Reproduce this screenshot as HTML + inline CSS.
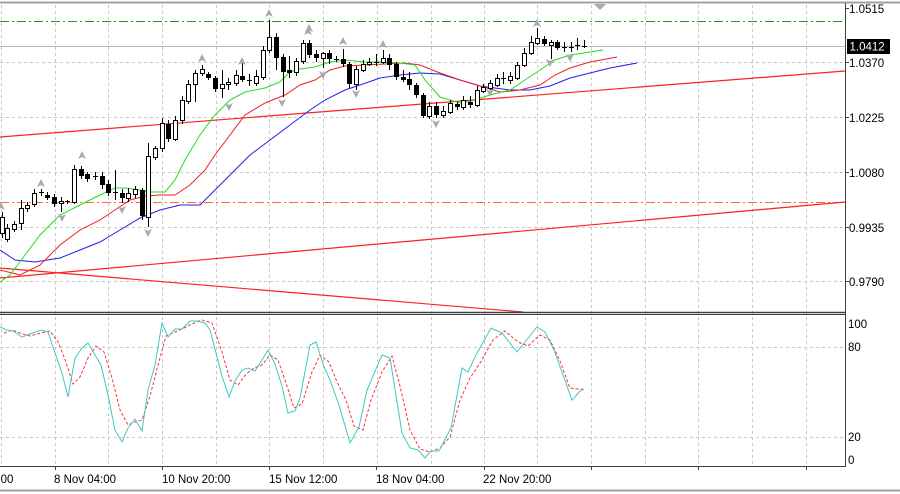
<!DOCTYPE html>
<html><head><meta charset="utf-8"><style>
html,body{margin:0;padding:0;background:#fff;}
svg{display:block;font-family:"Liberation Sans",sans-serif;}
</style></head><body>
<svg width="900" height="494" viewBox="0 0 900 494" xmlns="http://www.w3.org/2000/svg">
<rect width="900" height="494" fill="#fff"/>
<line x1="0" y1="2.5" x2="900" y2="2.5" stroke="#a0a0a0" stroke-width="2"/>
<g stroke="#c8c8c8" stroke-dasharray="3,3" stroke-width="1">
<line x1="1.5" y1="5" x2="1.5" y2="466"/><line x1="55.5" y1="5" x2="55.5" y2="466"/><line x1="108.5" y1="5" x2="108.5" y2="466"/><line x1="162.5" y1="5" x2="162.5" y2="466"/><line x1="216.5" y1="5" x2="216.5" y2="466"/><line x1="269.5" y1="5" x2="269.5" y2="466"/><line x1="323.5" y1="5" x2="323.5" y2="466"/><line x1="377.5" y1="5" x2="377.5" y2="466"/><line x1="431.5" y1="5" x2="431.5" y2="466"/><line x1="484.5" y1="5" x2="484.5" y2="466"/><line x1="537.5" y1="5" x2="537.5" y2="466"/><line x1="591.5" y1="5" x2="591.5" y2="466"/><line x1="645.5" y1="5" x2="645.5" y2="466"/><line x1="698.5" y1="5" x2="698.5" y2="466"/><line x1="752.5" y1="5" x2="752.5" y2="466"/><line x1="806.5" y1="5" x2="806.5" y2="466"/>
<line x1="0" y1="62.5" x2="845" y2="62.5"/><line x1="0" y1="117.5" x2="845" y2="117.5"/><line x1="0" y1="172.5" x2="845" y2="172.5"/><line x1="0" y1="227.5" x2="845" y2="227.5"/><line x1="0" y1="281.5" x2="845" y2="281.5"/>
<line x1="0" y1="347.5" x2="845" y2="347.5"/><line x1="0" y1="437.5" x2="845" y2="437.5"/>
</g>
<line x1="0" y1="21.5" x2="845" y2="21.5" stroke="#1a9a1a" stroke-dasharray="9,3,2,3"/>
<line x1="0" y1="46.5" x2="845" y2="46.5" stroke="#b8b8b8"/>
<line x1="0" y1="202.5" x2="845" y2="202.5" stroke="#ff6a30" stroke-dasharray="9,3,2,3"/>
<g stroke="#ff2020" stroke-width="1.2" fill="none">
<line x1="0" y1="137" x2="845" y2="71"/>
<line x1="0" y1="278" x2="845" y2="202"/>
<line x1="0" y1="268" x2="523" y2="312"/>
</g>
<polyline fill="none" stroke="#2020ee" points="0,250 15,260 35,262 60,258 80,250 100,242 120,230 140,218 160,210 180,205 200,205 215,190 230,175 250,155 270,140 290,125 310,110 325,100 345,90 360,85 380,78 400,75 420,73 440,74 460,80 480,86 510,90 530,90 550,86 570,78 590,73 610,68 637,63"/>
<polyline fill="none" stroke="#ee2020" points="0,270 20,275 40,265 60,245 80,230 100,220 115,210 130,200 145,196 160,195 175,195 190,185 205,170 215,155 230,135 245,115 265,103 285,95 300,85 315,80 330,70 345,66 365,65 385,64 405,63 420,65 440,73 460,80 480,86 500,92 520,90 540,85 555,75 570,68 590,62 617,57"/>
<polyline fill="none" stroke="#20dd20" points="0,282 10,275 25,255 40,235 60,215 80,205 100,195 115,188 125,188 140,190 150,192 165,192 175,180 185,160 200,135 215,115 230,100 245,92 265,88 280,82 290,72 300,69 315,67 330,62 345,60 365,62 385,62 400,63 415,65 425,80 440,97 460,103 475,100 490,95 510,90 525,80 540,70 555,60 570,55 590,52 603,50"/>
<g stroke="#000" stroke-width="1">
<!-- candles: wicks -->
<path d="M2.5 212V238M7.5 224V242M14.5 221V232M21.5 200V230M27.5 202V212M34.5 189V207M41.5 189V196M47.5 192V200M54.5 194V207M61.5 197V212M67.5 200V204M74.5 165V204M81.5 166V179M87.5 172V182M95.5 172V180M102.5 172V189M108.5 180V196M115.5 170V200M122.5 189V203M128.5 188V202M135.5 186V198M142.5 188V220M148.5 143V227M155.5 146V160M162.5 118V152M168.5 120V142M175.5 116V141M182.5 96V124M188.5 80V104M195.5 70V102M202.5 65V76M208.5 72V80M215.5 76V92M222.5 70V98M228.5 78V90M236.5 70V86M242.5 62V82M249.5 74V86M256.5 70V86M263.5 46V80M269.5 20V53M276.5 33V70M283.5 54V97M289.5 56V78M296.5 58V76M303.5 40V64M309.5 40V58M316.5 50V62M323.5 52V68M329.5 50V64M336.5 56V62M343.5 49V67M349.5 62V88M356.5 66V90M363.5 60V72M369.5 58V66M376.5 54V66M383.5 50V64M389.5 54V70M396.5 62V80M403.5 70V82M409.5 72V90M416.5 83V98M423.5 93V118M429.5 102V119M436.5 102V118M443.5 106V118M450.5 100V114M457.5 102V110M463.5 96V110M470.5 96V108M477.5 86V107M483.5 84V93M490.5 80V90M497.5 74V87M503.5 72V84M510.5 72V84M517.5 62V80M524.5 48V67M531.5 36V55M537.5 28V45M544.5 36V46M551.5 40V59M557.5 40V50M564.5 42V52M571.5 42V52M577.5 38V50M584.5 40V48"/>
</g>
<g stroke="#000" stroke-width="1" fill="#fff">
<rect x="0.5" y="217.5" width="4" height="16"/><rect x="5.5" y="228.5" width="4" height="11"/><rect x="12.5" y="224.5" width="4" height="5"/><rect x="19.5" y="208.5" width="4" height="15"/><rect x="25.5" y="205.5" width="4" height="3"/><rect x="32.5" y="193.5" width="4" height="11"/><rect x="59.5" y="201.5" width="4" height="2"/><rect x="72.5" y="169.5" width="4" height="33"/><rect x="126.5" y="193.5" width="4" height="5"/><rect x="133.5" y="189.5" width="4" height="5"/><rect x="146.5" y="156.5" width="4" height="61"/><rect x="153.5" y="148.5" width="4" height="9"/><rect x="160.5" y="123.5" width="4" height="25"/><rect x="173.5" y="120.5" width="4" height="19"/><rect x="180.5" y="100.5" width="4" height="20"/><rect x="186.5" y="84.5" width="4" height="17"/><rect x="193.5" y="73.5" width="4" height="11"/><rect x="200.5" y="69.5" width="4" height="4"/><rect x="220.5" y="84.5" width="4" height="4"/><rect x="226.5" y="82.5" width="4" height="2"/><rect x="234.5" y="75.5" width="4" height="8"/><rect x="254.5" y="76.5" width="4" height="7"/><rect x="261.5" y="50.5" width="4" height="27"/><rect x="267.5" y="37.5" width="4" height="13"/><rect x="294.5" y="61.5" width="4" height="11"/><rect x="301.5" y="43.5" width="4" height="18"/><rect x="321.5" y="53.5" width="4" height="5"/><rect x="354.5" y="69.5" width="4" height="15"/><rect x="361.5" y="64.5" width="4" height="6"/><rect x="367.5" y="62.5" width="4" height="2"/><rect x="381.5" y="58.5" width="4" height="4"/><rect x="427.5" y="106.5" width="4" height="10"/><rect x="441.5" y="111.5" width="4" height="4"/><rect x="448.5" y="103.5" width="4" height="9"/><rect x="461.5" y="100.5" width="4" height="7"/><rect x="475.5" y="90.5" width="4" height="15"/><rect x="481.5" y="87.5" width="4" height="4"/><rect x="488.5" y="83.5" width="4" height="5"/><rect x="495.5" y="78.5" width="4" height="7"/><rect x="508.5" y="76.5" width="4" height="4"/><rect x="515.5" y="65.5" width="4" height="13"/><rect x="522.5" y="53.5" width="4" height="12"/><rect x="529.5" y="42.5" width="4" height="11"/><rect x="535.5" y="38.5" width="4" height="5"/><rect x="549.5" y="42.5" width="4" height="3"/>
</g>
<g fill="#000">
<rect x="45" y="195" width="5" height="3"/><rect x="52" y="197" width="5" height="7"/><rect x="79" y="169" width="5" height="7"/><rect x="85" y="174" width="5" height="5"/><rect x="100" y="176" width="5" height="9"/><rect x="106" y="184" width="5" height="9"/><rect x="120" y="193" width="5" height="5"/><rect x="140" y="190" width="5" height="26"/><rect x="166" y="124" width="5" height="15"/><rect x="206" y="74" width="5" height="4"/><rect x="213" y="78" width="5" height="11"/><rect x="240" y="76" width="5" height="4"/><rect x="241" y="76" width="4" height="4"/><rect x="274" y="37" width="5" height="21"/><rect x="281" y="57" width="5" height="15"/><rect x="287" y="70" width="5" height="3"/><rect x="307" y="43" width="5" height="12"/><rect x="314" y="54" width="5" height="4"/><rect x="327" y="53" width="5" height="6"/><rect x="341" y="59" width="5" height="5"/><rect x="347" y="64" width="5" height="20"/><rect x="387" y="58" width="5" height="7"/><rect x="394" y="64" width="5" height="13"/><rect x="401" y="77" width="5" height="3"/><rect x="407" y="79" width="5" height="6"/><rect x="414" y="85" width="5" height="10"/><rect x="421" y="95" width="5" height="21"/><rect x="434" y="106" width="5" height="9"/><rect x="455" y="104" width="5" height="3"/><rect x="468" y="102" width="5" height="3"/><rect x="542" y="39" width="5" height="5"/><rect x="555" y="42" width="5" height="6"/>
<rect x="39" y="192" width="5" height="1"/><rect x="65" y="201" width="5" height="1"/><rect x="93" y="176" width="5" height="1"/><rect x="113" y="192" width="5" height="1"/><rect x="247" y="80" width="5" height="1"/><rect x="334" y="59" width="5" height="1"/><rect x="374" y="62" width="5" height="1"/><rect x="501" y="78" width="5" height="1"/><rect x="562" y="47" width="5" height="1"/><rect x="569" y="47" width="5" height="1"/><rect x="575" y="45" width="5" height="1"/><rect x="582" y="46" width="5" height="1"/>
</g>
<g fill="#a8a8b0">
<path d="M269 9l-4 8 4-2 4 2z"/><path d="M309 24l-4 8 4-2 4 2z"/><path d="M343 37l-4 8 4-2 4 2z"/><path d="M383 40l-4 8 4-2 4 2z"/><path d="M202 54l-4 8 4-2 4 2z"/><path d="M242 57l-4 8 4-2 4 2z"/><path d="M82 151l-4 8 4-2 4 2z"/><path d="M41 179l-4 8 4-2 4 2z"/><path d="M1 202l-4 8 4-2 4 2z"/><path d="M537 19l-4 8 4-2 4 2z"/><path d="M308 27l-4 8 4-2 4 2z"/>
<path d="M148 237l-4-8 4 2 4-2z"/><path d="M122 214l-4-8 4 2 4-2z"/><path d="M62 222l-4-8 4 2 4-2z"/><path d="M229 111l-4-8 4 2 4-2z"/><path d="M282 107l-4-8 4 2 4-2z"/><path d="M323 79l-4-8 4 2 4-2z"/><path d="M356 98l-4-8 4 2 4-2z"/><path d="M436 128l-4-8 4 2 4-2z"/><path d="M490 97l-4-8 4 2 4-2z"/><path d="M550 67l-4-8 4 2 4-2z"/><path d="M570 62l-4-8 4 2 4-2z"/><path d="M600 10l-6-6h12z"/>
</g>
<line x1="0" y1="312.5" x2="846" y2="312.5" stroke="#404040" stroke-width="1.5"/>
<line x1="0" y1="314.5" x2="846" y2="314.5" stroke="#404040" stroke-width="1"/>
<line x1="845.5" y1="3" x2="845.5" y2="467" stroke="#404040"/>
<line x1="0" y1="466.5" x2="846" y2="466.5" stroke="#404040"/>
<polyline fill="none" stroke="#ff3030" stroke-dasharray="3,2" points="4,333 12,330 20,333 30,336 41,333 50,331 58,342 66,362 73,384 80,377 88,358 96,346 104,352 112,378 120,410 128,425 135,422 142,420 150,396 158,365 166,336 175,332 184,328 194,323 202,320 212,323 222,352 230,380 238,385 246,374 254,368 262,365 270,355 278,360 286,383 294,408 302,404 312,372 320,355 329,362 337,382 346,400 354,426 363,430 371,400 382,372 392,356 400,386 410,430 420,449 430,452 440,448 450,437 460,400 470,378 480,363 493,340 505,331 518,342 528,346 540,335 550,340 560,361 570,388 585,390"/>
<polyline fill="none" stroke="#40c8c0" points="0,327 7,330 13,331 22,337 30,334 41,330 48,332 55,353 62,373 68,397 75,358 82,348 88,343 95,355 101,365 108,395 115,430 122,442 128,428 135,419 142,431 148,390 155,365 162,323 168,337 175,329 182,329 190,321 197,321 205,323 210,330 222,376 229,397 235,381 242,370 248,368 255,371 262,360 268,350 275,364 282,386 288,413 295,411 300,398 310,345 316,342 324,367 330,380 339,405 350,443 359,427 367,390 382,355 390,358 402,433 410,448 418,450 425,458 431,451 439,451 451,428 462,368 468,372 476,355 491,328 502,333 517,352 525,342 537,327 545,332 554,350 563,375 572,400 583,388"/>
<rect x="847" y="39" width="43" height="15" fill="#000"/>
<g font-size="11.5" fill="#000">
<text x="849" y="13">1.0515</text>
<text x="849.5" y="50.5" fill="#fff">1.0412</text>
<text x="849" y="67">1.0370</text>
<text x="849" y="122">1.0225</text>
<text x="849" y="177">1.0080</text>
<text x="849" y="232">0.9935</text>
<text x="849" y="286">0.9790</text>
<text x="848" y="328">100</text>
<text x="848" y="351">80</text>
<text x="848" y="441">20</text>
<text x="848" y="464">0</text>
<text x="-9" y="483">4:00</text>
<text x="54" y="483">8 Nov 04:00</text>
<text x="162" y="483">10 Nov 20:00</text>
<text x="269" y="483">15 Nov 12:00</text>
<text x="376" y="483">18 Nov 04:00</text>
<text x="483" y="483">22 Nov 20:00</text>
</g>
<g stroke="#404040"><path d="M55.5 467v3M162.5 467v3M269.5 467v3M376.5 467v3M484.5 467v3M591.5 467v3M698.5 467v3M806.5 467v3M846 8.5h3M846 62.5h3M846 117.5h3M846 172.5h3M846 227.5h3M846 281.5h3"/></g>
<rect x="0" y="0" width="10" height="494" fill="none"/>
<line x1="0" y1="490.5" x2="900" y2="490.5" stroke="#a0a0a0" stroke-width="2"/>
</svg>
</body></html>
